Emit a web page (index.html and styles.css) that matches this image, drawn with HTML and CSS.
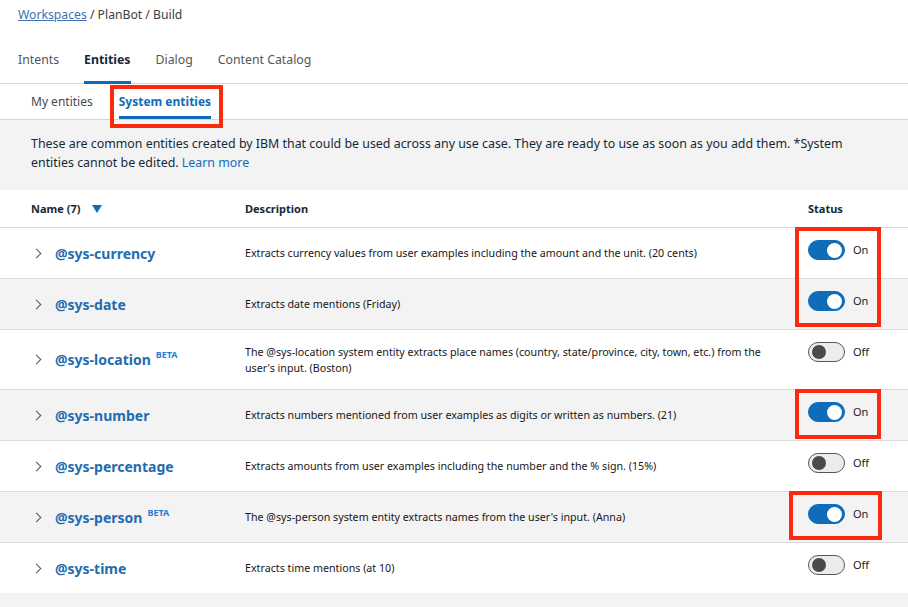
FILE: index.html
```html
<!DOCTYPE html>
<html>
<head>
<meta charset="utf-8">
<link rel="stylesheet" href="styles.css">
</head>
<body>
<div class="breadcrumb"><a class="crumb-link">Workspaces</a> / PlanBot / Build</div>
<nav class="tabs">
  <span class="tab">Intents</span>
  <span class="tab active">Entities</span>
  <span class="tab">Dialog</span>
  <span class="tab">Content Catalog</span>
</nav>
<nav class="subtabs">
  <span class="subtab">My entities</span>
  <span class="subtab active">System entities<span class="hl hl-sub"></span></span>
</nav>
<div class="notice">These are common entities created by IBM that could be used across any use case. They are ready to use as soon as you add them. *System entities cannot be edited. <a class="learn">Learn more</a></div>
<div class="table">
  <div class="row head">
    <div class="c-name">Name (7) <span class="sort"></span></div>
    <div class="c-desc">Description</div>
    <div class="c-status">Status</div>
  </div>
  <div class="row">
    <div class="c-name"><span class="chev"></span><span class="ent">@sys-currency</span></div>
    <div class="c-desc">Extracts currency values from user examples including the amount and the unit. (20 cents)</div>
    <div class="c-status"><span class="toggle on"></span><span class="lbl">On</span><span class="hl hl-two"></span></div>
  </div>
  <div class="row alt">
    <div class="c-name"><span class="chev"></span><span class="ent">@sys-date</span></div>
    <div class="c-desc">Extracts date mentions (Friday)</div>
    <div class="c-status"><span class="toggle on"></span><span class="lbl">On</span></div>
  </div>
  <div class="row tall">
    <div class="c-name"><span class="chev"></span><span class="ent">@sys-location</span><sup class="beta">BETA</sup></div>
    <div class="c-desc">The @sys-location system entity extracts place names (country, state/province, city, town, etc.) from the user's input. (Boston)</div>
    <div class="c-status"><span class="toggle"></span><span class="lbl">Off</span></div>
  </div>
  <div class="row alt">
    <div class="c-name"><span class="chev"></span><span class="ent">@sys-number</span></div>
    <div class="c-desc">Extracts numbers mentioned from user examples as digits or written as numbers. (21)</div>
    <div class="c-status"><span class="toggle on"></span><span class="lbl">On</span><span class="hl hl-one"></span></div>
  </div>
  <div class="row">
    <div class="c-name"><span class="chev"></span><span class="ent">@sys-percentage</span></div>
    <div class="c-desc">Extracts amounts from user examples including the number and the % sign. (15%)</div>
    <div class="c-status"><span class="toggle"></span><span class="lbl">Off</span></div>
  </div>
  <div class="row alt">
    <div class="c-name"><span class="chev"></span><span class="ent">@sys-person</span><sup class="beta">BETA</sup></div>
    <div class="c-desc">The @sys-person system entity extracts names from the user's input. (Anna)</div>
    <div class="c-status"><span class="toggle on"></span><span class="lbl">On</span><span class="hl hl-wide"></span></div>
  </div>
  <div class="row last">
    <div class="c-name"><span class="chev"></span><span class="ent">@sys-time</span></div>
    <div class="c-desc">Extracts time mentions (at 10)</div>
    <div class="c-status"><span class="toggle"></span><span class="lbl">Off</span></div>
  </div>
</div>
<div class="footer"></div>
</body>
</html>
```
FILE: styles.css
```css
* { box-sizing: border-box; }
html, body { margin: 0; padding: 0; background: #fff; }
body {
  font-family: "Noto Sans", "Open Sans", sans-serif;
  color: #171717;
  width: 908px;
  height: 607px;
  overflow: hidden;
}
.breadcrumb {
  padding: 6px 18px 0;
  height: 36px;
  font-size: 12.2px;
  line-height: 18px;
  color: #3d3d3d;
}
.crumb-link {
  color: #3d70b2;
  text-decoration: underline;
}
.tabs {
  display: flex;
  height: 48px;
  padding-left: 18px;
  border-bottom: 1px solid #d6d6d6;
  align-items: stretch;
}
.tab {
  font-size: 12.3px;
  color: #555;
  margin-right: 25px;
  padding-top: 15px;
  border-bottom: 3px solid transparent;
  margin-bottom: -1px;
}
.tab.active {
  font-weight: 700;
  color: #152935;
  border-bottom-color: #0f6cb8;
}
.subtabs {
  display: flex;
  height: 36px;
  padding-left: 31px;
  border-bottom: 1px solid #d6d6d6;
}
.subtab {
  font-size: 12px;
  color: #4a4a4a;
  margin-right: 26px;
  padding-top: 9px;
  position: relative;
}
.subtab.active {
  font-weight: 700;
  color: #0f6cb8;
  border-bottom: 3px solid #0f6cb8;
  height: 35px;
}
.notice {
  background: #f3f3f3;
  padding: 14px 60px 0 31px;
  height: 70px;
  font-size: 12.4px;
  line-height: 19px;
  color: #152935;
}
.learn { color: #0f6cb8; }
.row {
  display: flex;
  align-items: center;
  height: 51px;
  border-bottom: 1px solid #dcdcdc;
  background: #fff;
}
.row.alt { background: #f3f3f3; }
.row.tall { height: 60px; }
.row.last { height: 50px; border-bottom: none; }
.row.head {
  height: 38px;
  font-size: 11px;
  font-weight: 700;
  color: #152935;
  border-bottom: 1px solid #d6d6d6;
}
.c-name {
  width: 245px;
  padding-left: 31px;
  display: flex;
  align-items: center;
}
.c-desc {
  flex: 1;
  font-size: 10.7px;
  line-height: 16px;
  color: #171717;
  padding-right: 40px;
}
.row.head .c-desc { font-weight: 700; color: #152935; font-size: 11px; }
.c-status {
  width: 100px;
  align-self: stretch;
  display: flex;
  align-items: flex-start;
  position: relative;
  font-size: 11px;
  padding-top: 12px;
}
.row.head .c-status { padding-top: 0; align-items: center; }
.sort {
  display: inline-block;
  width: 0; height: 0;
  border-left: 5px solid transparent;
  border-right: 5px solid transparent;
  border-top: 8px solid #0f6cb8;
  margin-left: 12px;
}
.chev {
  width: 7px; height: 7px;
  border-top: 1px solid #555;
  border-right: 1px solid #555;
  transform: rotate(45deg);
  margin-left: 2px;
  margin-right: 15px;
}
.ent {
  font-size: 14px;
  font-weight: 700;
  color: #1f6cb0;
}
.beta {
  font-size: 9px;
  font-weight: 700;
  color: #1f7fd6;
  margin-left: 5px;
  align-self: flex-start;
  margin-top: -2px;
}
.toggle {
  width: 37px;
  height: 20px;
  border-radius: 10px;
  background: #ececec;
  border: 1px solid #565656;
  position: relative;
  flex: none;
}
.toggle::after {
  content: "";
  position: absolute;
  top: 2px;
  left: 3px;
  width: 14px;
  height: 14px;
  border-radius: 50%;
  background: #4a4a4a;
}
.toggle.on { background: #0f6cb8; border-color: #0f6cb8; }
.toggle.on::after { left: auto; right: 2px; background: #fff; width: 15px; height: 15px; top: 1.5px; }
.lbl { margin-left: 8px; color: #222; line-height: 20px; }
.hl {
  position: absolute;
  border: 4px solid #fb2a0f;
  pointer-events: none;
}
.hl-sub { left: -9px; top: 1px; width: 113px; height: 43px; }
.hl-two { left: -13px; top: -1px; width: 86px; height: 100px; }
.hl-one { left: -13px; top: -1px; width: 86px; height: 50px; }
.hl-wide { left: -19px; top: -1px; width: 93px; height: 49px; }
.footer { background: #f3f3f3; height: 20px; }
```
